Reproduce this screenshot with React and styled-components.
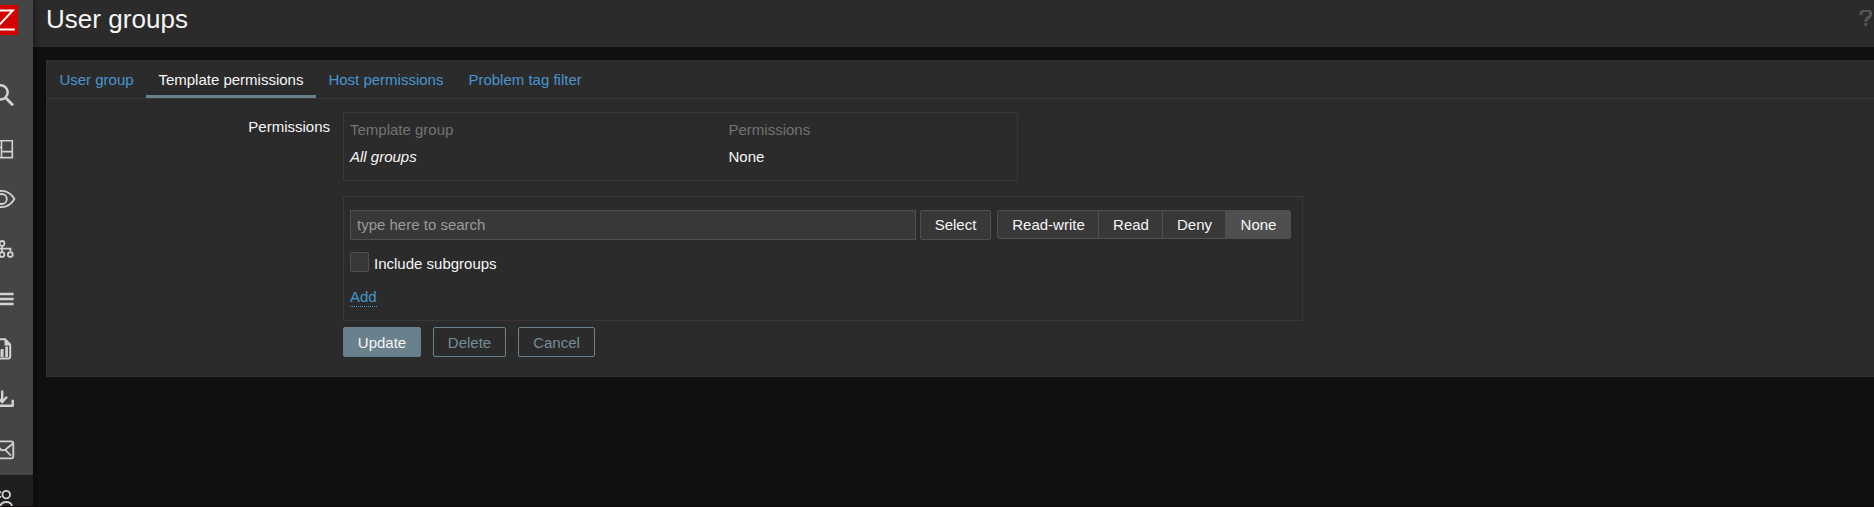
import React from 'react';
import styled, { createGlobalStyle, css } from 'styled-components';

const Global = createGlobalStyle`
  * { box-sizing: border-box; }
  html, body { margin: 0; padding: 0; height: 100%; overflow: hidden; }
  body { background: #0e1012; color: #f6f6f6; font: 15px/18px "Liberation Sans", Arial, sans-serif; }
  button, input { font: inherit; margin: 0; }
`;

const Page = styled.div`
  display: flex;
  height: 507px;
  border-bottom: 1px solid #120609;
  overflow: hidden;
`;

const Sidebar = styled.aside`
  flex: 0 0 33px;
  height: 507px;
  display: flex;
  flex-direction: column;
  background: #454545;
  box-shadow: 0 0 9px rgba(0, 0, 0, 0.6);
  z-index: 1;
`;

const Logo = styled.svg`
  display: block;
  flex: none;
  width: 18px;
  height: 30px;
  margin: 5px 0 35px;
  background: #d40000;
`;

const NavItem = styled.a`
  flex: none;
  height: 50px;
  margin-bottom: ${(p) => p.$gap || 0}px;
  background: ${(p) => (p.$active ? '#1f1f1f' : 'transparent')};
`;

const NavIcon = styled.svg`
  display: block;
  width: 33px;
  height: 50px;
  fill: none;
  stroke: #d2d2d2;
  stroke-width: 1.8;
`;

const Main = styled.main`
  flex: 1;
  min-width: 0;
  display: flex;
  flex-direction: column;
`;

const Header = styled.header`
  height: 47px;
  flex: none;
  display: flex;
  justify-content: space-between;
  align-items: flex-start;
  padding: 4px 1px 0 13px;
  background: #2b2b2b;
  border-bottom: 1px solid #303030;
`;

const Title = styled.h1`
  margin: 0;
  font-size: 26px;
  font-weight: 400;
  line-height: 30px;
  letter-spacing: 0.04px;
`;

const Help = styled.svg`
  width: 14px;
  height: 20px;
  margin-top: 6px;
  fill: none;
  stroke: #555;
  stroke-width: 3;
`;

const Panel = styled.section`
  height: 317px;
  margin: 13px 0 0 13px;
  background: #2b2b2b;
  border: 1px solid #303030;
  border-right: 0;
`;

const Tabs = styled.nav`
  height: 38px;
  display: flex;
  border-bottom: 1px solid #383838;
`;

const Tab = styled.a`
  width: ${(p) => p.$w}px;
  height: 37px;
  padding: 10px 0 0 12.4px;
  white-space: nowrap;
  color: ${(p) => (p.$active ? '#f6f6f6' : '#4796d0')};
  ${(p) => p.$active && css`border-bottom: 3px solid #69808d;`}
`;

const Form = styled.form`
  display: flex;
  padding: 13px 0 0;
`;

const Label = styled.label`
  width: 283px;
  padding-top: 6px;
  text-align: right;
`;

const Fields = styled.div`
  margin-left: 13px;
`;

const Frame = styled.div`
  width: ${(p) => p.$w}px;
  height: ${(p) => p.$h}px;
  padding: ${(p) => p.$pad};
  margin-bottom: ${(p) => p.$gap}px;
  border: 1px solid #383838;
`;

const GroupTable = styled.div`
  display: grid;
  grid-template-columns: 378.5px auto;
  row-gap: 9px;
`;

const Heading = styled.span`
  color: #737373;
`;

const Row = styled.div`
  display: flex;
  align-items: flex-start;
`;

const SearchInput = styled.input`
  width: 566px;
  height: 30px;
  padding: 0 6px 2px;
  color: #f6f6f6;
  background: #383838;
  border: 1px solid #4f4f4f;
  border-radius: 0;
  &::placeholder { color: #9a9a9a; opacity: 1; }
`;

const Button = styled.button`
  width: ${(p) => p.$w}px;
  height: 30px;
  padding: 1px 0 0;
  margin-right: ${(p) => p.$gap || 0}px;
  border-radius: 2px;
  border: 1px solid #69808d;
  background: ${(p) => (p.$primary ? '#69808d' : 'transparent')};
  color: ${(p) => (p.$primary ? '#f6f6f6' : '#768d99')};
`;

const SelectButton = styled(Button)`
  padding: 0;
  margin: 0 6px 0 4px;
  background: #383838;
  border-color: #4f4f4f;
  color: #f6f6f6;
`;

const Segments = styled.div`
  display: flex;
  height: 29px;
  border: 1px solid #4f4f4f;
  border-radius: 2px;
  overflow: hidden;
`;

const Segment = styled.button`
  width: ${(p) => p.$w}px;
  padding: 0 0 0 1px;
  border: 0;
  border-right: ${(p) => (p.$active ? 0 : 1)}px solid #4f4f4f;
  background: ${(p) => (p.$active ? '#4f4f4f' : '#383838')};
  color: #f6f6f6;
`;

const CheckRow = styled.label`
  display: flex;
  gap: 5px;
  margin-top: 12px;
`;

const Check = styled.span`
  width: 19px;
  height: 20px;
  background: #383838;
  border: 1px solid #4f4f4f;
  border-radius: 2px;
`;

const CheckText = styled.span`
  padding-top: 3px;
`;

const AddLink = styled.a`
  display: inline-block;
  height: 19px;
  margin-top: 15px;
  line-height: 18px;
  color: #4796d0;
  border-bottom: 1px dotted #4796d0;
`;

const NAV = [
  { id: 'search', gap: 5, art: <><circle cx="0.6" cy="22.3" r="7.1" strokeWidth="2.5" /><path d="M5.8 28 13 35.3" strokeWidth="2.9" /></> },
  { id: 'dashboards', art: <path d="M-10 15.8H12.3V32.6H-10M1.5 15.8V32.6M-10 22.3H1.5M1.5 26.6H12.3" strokeWidth="1.6" /> },
  { id: 'monitoring', art: <><path d="M-11 24C-5 13.2 8 13.2 14.4 24 8 34.8-5 34.8-11 24Z" /><circle cx="1.8" cy="24" r="5" /></> },
  { id: 'services', art: <><circle cx="2" cy="18.4" r="2.4" /><circle cx="2" cy="29.6" r="2.4" /><circle cx="10.3" cy="29.6" r="2.4" /><path d="M2 21V27M-8 23.7H10.5V26" /></> },
  { id: 'inventory', art: <path d="M-10 19H13.6M-10 24H13.6M-10 29H13.6" strokeWidth="2.6" /> },
  { id: 'reports', art: <><path d="M-6 14.2H5.2L10.2 19.6V31.5Q10.2 33.4 8.2 33.4H-6" strokeWidth="2" /><path d="M4.5 14V20.5H10.5Z" fill="#d2d2d2" stroke="none" /><path d="M-1 25V32M2.2 24V32M6.6 21.5V32" strokeWidth="2.7" /></> },
  { id: 'data', art: <><path d="M2.2 15.5V26M-3.5 21.5 2.2 27 7 21.8" strokeWidth="2.4" /><path d="M-10 30.8H12.7V24.8" strokeWidth="2.4" strokeLinejoin="round" /></> },
  { id: 'alerts', art: <><rect x="-9" y="16.3" width="22.3" height="17" rx="2" /><path d="M13 18.5 5.2 24.8 11 30.6M-2 21.5 1.5 25.2 5.2 24.8" /></> },
  { id: 'users', active: true, art: <><circle cx="6.2" cy="19.6" r="3.8" /><path d="M0 34Q0 27 6.2 27 12.3 27 12.3 34M-2 16.2Q0 16.2 0.6 18M-2 22.8Q0 22.8 0.6 21" /></> },
];

const TABS = [
  { text: 'User group', w: 99 },
  { text: 'Template permissions', w: 170, active: true },
  { text: 'Host permissions', w: 140 },
  { text: 'Problem tag filter', w: 140 },
];

const LEVELS = [
  { text: 'Read-write', w: 101 },
  { text: 'Read', w: 64 },
  { text: 'Deny', w: 63 },
  { text: 'None', w: 64, active: true },
];

export default function App() {
  return (
    <>
      <Global />
      <Page>
        <Sidebar>
          <Logo viewBox="0 0 18 30">
            <path d="M-6 5.5H12.8L-5 24.4H14.8" fill="none" stroke="#fff" strokeWidth="2" />
          </Logo>
          {NAV.map((n) => (
            <NavItem key={n.id} $gap={n.gap} $active={n.active}>
              <NavIcon viewBox="0 0 33 50">{n.art}</NavIcon>
            </NavItem>
          ))}
        </Sidebar>
        <Main>
          <Header>
            <Title>User groups</Title>
            <Help viewBox="0 0 14 20">
              <path d="M1.8 5Q2.2 0.3 6.8 0.3 11.8 0.3 11.8 4 11.8 6.1 9.2 7.8 6.8 9.3 6.8 11.8M6.8 13V16" />
            </Help>
          </Header>
          <Panel>
            <Tabs>
              {TABS.map((t) => (
                <Tab key={t.text} $w={t.w} $active={t.active}>{t.text}</Tab>
              ))}
            </Tabs>
            <Form onSubmit={(e) => e.preventDefault()}>
              <Label>Permissions</Label>
              <Fields>
                <Frame $w={675} $h={69} $gap={15} $pad="8px 6px">
                  <GroupTable>
                    <Heading>Template group</Heading>
                    <Heading>Permissions</Heading>
                    <em>All groups</em>
                    <span>None</span>
                  </GroupTable>
                </Frame>
                <Frame $w={960} $h={125} $gap={6} $pad="13px 6px">
                  <Row>
                    <SearchInput placeholder="type here to search" />
                    <SelectButton type="button" $w={71}>Select</SelectButton>
                    <Segments>
                      {LEVELS.map((l) => (
                        <Segment type="button" key={l.text} $w={l.w} $active={l.active}>{l.text}</Segment>
                      ))}
                    </Segments>
                  </Row>
                  <CheckRow>
                    <Check />
                    <CheckText>Include subgroups</CheckText>
                  </CheckRow>
                  <AddLink>Add</AddLink>
                </Frame>
                <Row>
                  <Button $primary $w={78} $gap={12}>Update</Button>
                  <Button type="button" $w={73} $gap={12}>Delete</Button>
                  <Button type="button" $w={77}>Cancel</Button>
                </Row>
              </Fields>
            </Form>
          </Panel>
        </Main>
      </Page>
    </>
  );
}
